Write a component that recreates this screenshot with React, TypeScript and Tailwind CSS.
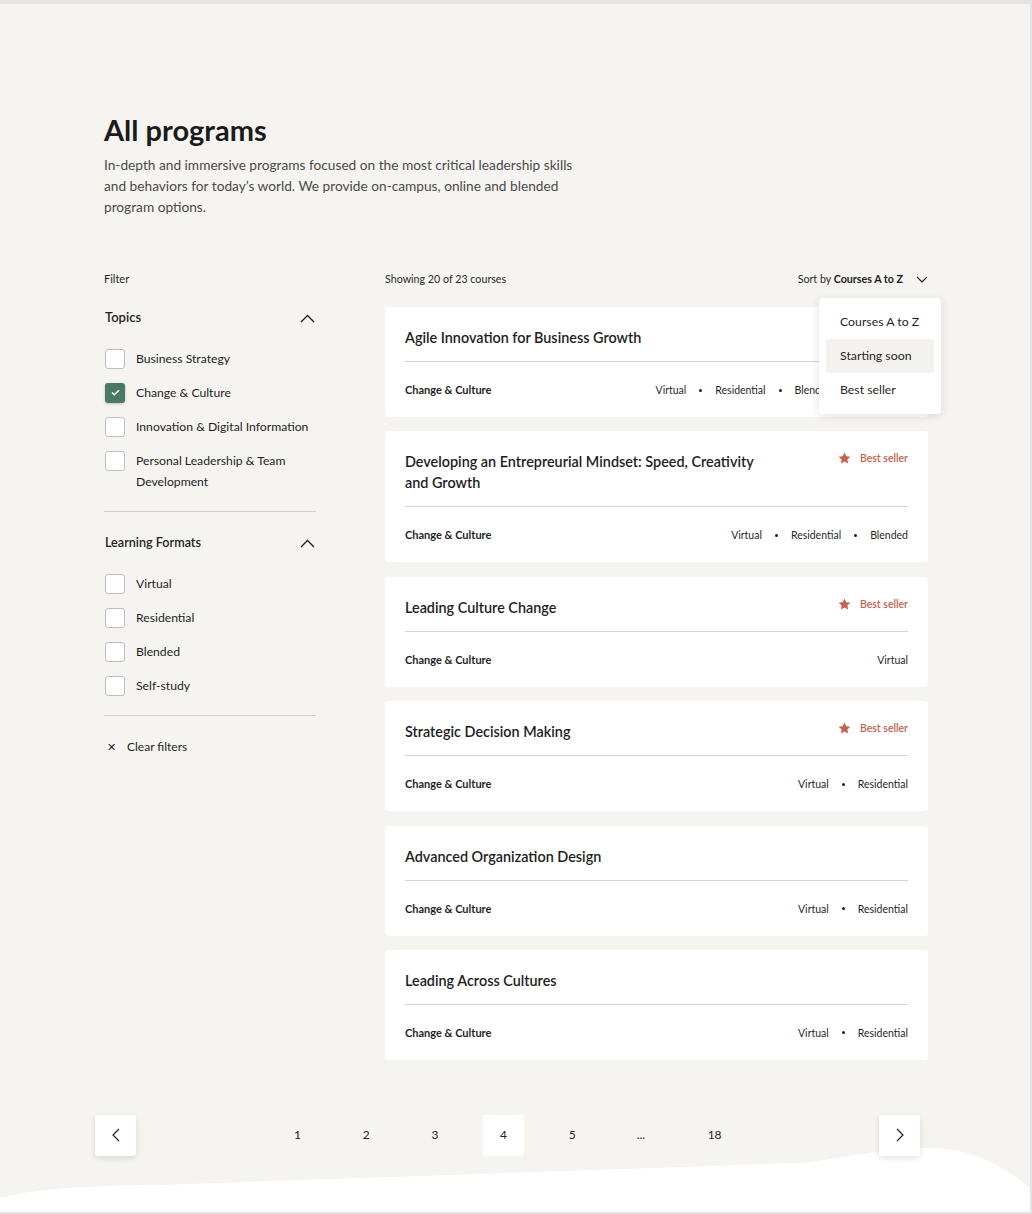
import React from 'react';

interface Course {
  title: string;
  topic: string;
  formats: string[];
  bestSeller?: boolean;
}

const courses: Course[] = [
  {
    title: 'Agile Innovation for Business Growth',
    topic: 'Change & Culture',
    formats: ['Virtual', 'Residential', 'Blended', 'Self-study'],
  },
  {
    title: 'Developing an Entrepreurial Mindset: Speed, Creativity and Growth',
    topic: 'Change & Culture',
    formats: ['Virtual', 'Residential', 'Blended'],
    bestSeller: true,
  },
  { title: 'Leading Culture Change', topic: 'Change & Culture', formats: ['Virtual'], bestSeller: true },
  { title: 'Strategic Decision Making', topic: 'Change & Culture', formats: ['Virtual', 'Residential'], bestSeller: true },
  { title: 'Advanced Organization Design', topic: 'Change & Culture', formats: ['Virtual', 'Residential'] },
  { title: 'Leading Across Cultures', topic: 'Change & Culture', formats: ['Virtual', 'Residential'] },
];

const topics = [
  { label: 'Business Strategy', checked: false },
  { label: 'Change & Culture', checked: true },
  { label: 'Innovation & Digital Information', checked: false },
  { label: 'Personal Leadership & Team Development', checked: false },
];

const formats = ['Virtual', 'Residential', 'Blended', 'Self-study'];

const ChevronUp = () => (
  <svg width="15" height="9" viewBox="0 0 15 9" fill="none" className="text-[#1f1f1f]">
    <path d="M1 8L7.5 1.5L14 8" stroke="currentColor" strokeWidth="1.4" />
  </svg>
);

const ChevronDown = () => (
  <svg width="12" height="7" viewBox="0 0 12 7" fill="none" className="text-[#1f1f1f]">
    <path d="M1 1L6 6L11 1" stroke="currentColor" strokeWidth="1.1" />
  </svg>
);

const Star = () => (
  <svg width="13" height="12" viewBox="0 0 24 23" className="text-[#c6614b]">
    <path
      fill="currentColor"
      d="M12 0.8l3.4 7.2 7.9 1-5.8 5.4 1.5 7.8L12 18.4l-7 3.8 1.5-7.8L0.7 9l7.9-1z"
    />
  </svg>
);

const Checkbox = ({ checked }: { checked: boolean }) =>
  checked ? (
    <span className="flex h-5 w-5 shrink-0 items-center justify-center rounded-[3px] bg-[#4a7a66] shadow-[0_1px_3px_rgba(0,0,0,0.2)]">
      <svg width="9" height="7" viewBox="0 0 9 7" fill="none">
        <path d="M1 3.6L3.3 5.8L8 1.2" stroke="white" strokeWidth="1.4" />
      </svg>
    </span>
  ) : (
    <span className="block h-5 w-5 shrink-0 rounded-[3px] border border-[#bdbdbd] bg-white" />
  );

const FilterRow = ({ label, checked }: { label: string; checked: boolean }) => (
  <label className="flex items-start gap-[11px]">
    <span className="flex shrink-0 pt-[0.5px]">
      <Checkbox checked={checked} />
    </span>
    <span className="text-[12.2px] leading-[21px] text-[#1f1f1f]">{label}</span>
  </label>
);

const CourseCard = ({ course }: { course: Course }) => (
  <div className="rounded-[4px] bg-white px-5 pt-[20px]">
    <div className="flex items-start justify-between gap-6">
      <h3 className="max-w-[365px] text-[14.4px] font-semibold leading-[21px] text-[#1d1d1d]">{course.title}</h3>
      {course.bestSeller && (
        <div className="flex shrink-0 items-center gap-[9px] text-[10.5px] font-semibold leading-[14px] text-[#c6614b]">
          <Star />
          Best seller
        </div>
      )}
    </div>
    <div className="mt-[13px] h-px bg-[#d3d3d3]" />
    <div className="flex items-center justify-between pb-[19px] pt-[20px] text-[10.5px] leading-[16px] text-[#1f1f1f]">
      <span className="text-[11px] font-bold">{course.topic}</span>
      <div className="flex items-center whitespace-nowrap">
        {course.formats.map((f, i) => (
          <React.Fragment key={f}>
            {i > 0 && <span className="mx-[13px] h-[3px] w-[3px] rounded-full bg-[#1f1f1f]" />}
            <span>{f}</span>
          </React.Fragment>
        ))}
      </div>
    </div>
  </div>
);

const PageButton = ({ children, active }: { children: React.ReactNode; active?: boolean }) => (
  <div
    className={
      'flex h-[41px] w-[41px] items-center justify-center rounded-[3px] text-[12px] text-[#1f1f1f] ' +
      (active ? 'bg-white' : '')
    }
  >
    {children}
  </div>
);

export default function App() {
  return (
    <div
      className="relative h-[1214px] w-[1032px] overflow-hidden border-b-2 border-r-2 border-t-4 border-[#e3e3e5] bg-[#f5f4f0] text-[#1f1f1f]"
      style={{ fontFamily: 'Lato, "Open Sans", sans-serif' }}
    >
      {/* wave at the bottom */}
      <svg
        className="absolute bottom-0 left-0"
        width="1032"
        height="70"
        viewBox="0 0 1032 70"
        preserveAspectRatio="none"
      >
        <path
          fill="white"
          d="M0 56 C40 46 100 43 160 43 L800 21 C850 16 880 6 930 6 C975 6 1010 28 1032 48 V70 H0 Z"
        />
      </svg>

      <div className="relative pl-[104px] pt-[109px]">
        <h1 className="text-[29px] font-bold leading-[34px] text-[#1b1b1b]">All programs</h1>
        <p className="mt-[7px] max-w-[480px] text-[13.7px] leading-[21px] text-[#4a4a4a]">
          In-depth and immersive programs focused on the most critical leadership skills and behaviors for today’s
          world. We provide on-campus, online and blended program options.
        </p>

        <div className="mt-[54px] flex gap-[69px]">
          {/* Sidebar */}
          <aside className="w-[212px] shrink-0">
            <div className="text-[11px] leading-[16px]">Filter</div>

            <div className="mt-[21px] flex h-[20px] items-center justify-between pl-px pr-[1px]">
              <span className="text-[13px] font-semibold">Topics</span>
              <ChevronUp />
            </div>
            <div className="mt-[20px] flex flex-col gap-[13px] pl-px">
              {topics.map((t) => (
                <FilterRow key={t.label} label={t.label} checked={t.checked} />
              ))}
            </div>
            <div className="mt-[19px] h-px bg-[#cfcfcf]" />

            <div className="mt-[21px] flex h-[20px] items-center justify-between pl-px pr-[1px]">
              <span className="text-[12.6px] font-semibold">Learning Formats</span>
              <ChevronUp />
            </div>
            <div className="mt-[20px] flex flex-col gap-[13px] pl-px">
              {formats.map((f) => (
                <FilterRow key={f} label={f} checked={false} />
              ))}
            </div>
            <div className="mt-[19px] h-px bg-[#cfcfcf]" />

            <button className="mt-[20px] flex items-center gap-[11px] pl-[3px] text-[12px] leading-[21px]">
              <span className="text-[11px]">✕</span>
              Clear filters
            </button>
          </aside>

          {/* Listing */}
          <main className="w-[543px]">
            <div className="relative flex items-center justify-between text-[10.7px] leading-[16px]">
              <span className="text-[#2a2a2a]">Showing 20 of 23 courses</span>
              <div className="flex items-center gap-[13px]">
                <span className="text-[#2a2a2a]">
                  Sort by <span className="font-bold text-[#1b1b1b]">Courses A to Z</span>
                </span>
                <ChevronDown />
              </div>

              <div className="absolute right-[-13px] top-[27px] z-10 w-[122px] whitespace-nowrap rounded-[4px] bg-white px-[7px] py-[7px] shadow-[0_2px_10px_rgba(0,0,0,0.12)]">
                <div className="flex h-[34px] items-center px-[14px] text-[12.3px]">Courses A to Z</div>
                <div className="flex h-[34px] items-center rounded-[2px] bg-[#f3f2ee] px-[14px] text-[12.3px]">
                  Starting soon
                </div>
                <div className="flex h-[34px] items-center px-[14px] text-[12.3px]">Best seller</div>
              </div>
            </div>

            <div className="mt-[20px] flex flex-col gap-[14.4px]">
              {courses.map((c) => (
                <CourseCard key={c.title} course={c} />
              ))}
            </div>
          </main>
        </div>
      </div>

      {/* Pagination */}
      <div className="relative ml-[95px] mt-[55px] flex w-[825px] items-center">
        <button className="flex h-[41px] w-[41px] items-center justify-center rounded-[3px] bg-white shadow-[0_2px_6px_rgba(0,0,0,0.12)]">
          <svg width="8" height="14" viewBox="0 0 8 14" fill="none">
            <path d="M7 1L1 7L7 13" stroke="#1f1f1f" strokeWidth="1.2" />
          </svg>
        </button>
        <div className="ml-[141px] flex items-center gap-[27.7px]">
          <PageButton>1</PageButton>
          <PageButton>2</PageButton>
          <PageButton>3</PageButton>
          <PageButton active>4</PageButton>
          <PageButton>5</PageButton>
          <PageButton>...</PageButton>
          <div className="ml-[5px]">
            <PageButton>18</PageButton>
          </div>
        </div>
        <button className="ml-auto flex h-[41px] w-[41px] items-center justify-center rounded-[3px] bg-white shadow-[0_2px_6px_rgba(0,0,0,0.12)]">
          <svg width="8" height="14" viewBox="0 0 8 14" fill="none">
            <path d="M1 1L7 7L1 13" stroke="#1f1f1f" strokeWidth="1.2" />
          </svg>
        </button>
      </div>
    </div>
  );
}
